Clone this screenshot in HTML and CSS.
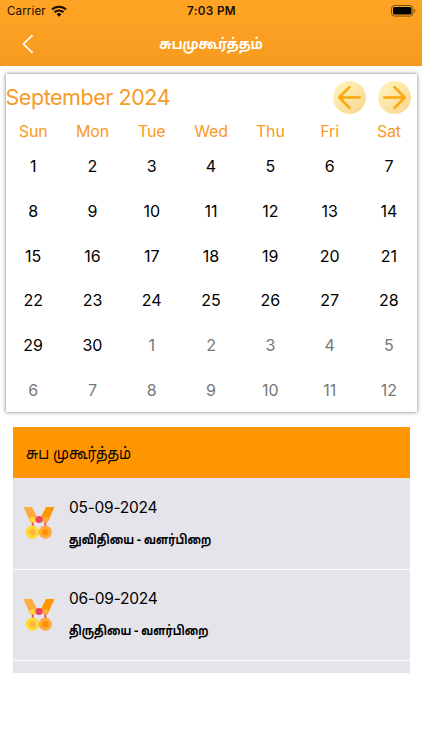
FILE: index.html
```html
<!DOCTYPE html>
<html lang="ta">
<head>
    <meta charset="UTF-8">
    <meta name="viewport" content="width=device-width, initial-scale=1.0">
    <title>சுபமுகூர்த்தம்</title>
    <link rel="stylesheet" href="styles.css">
</head>
<body>
    <!-- Header -->
    <header class="header">
        <div class="status-bar">
            <div class="carrier">
                <span>Carrier</span>
                <svg class="wifi" viewBox="0 0 16 12">
                    <g fill="none" stroke="#170d00" stroke-width="2.1">
                        <path d="M1 4.6a9.9 9.9 0 0 1 14 0"/>
                        <path d="M3.5 7.3a6.4 6.4 0 0 1 9 0"/>
                    </g>
                    <path d="M8 11.8 5.6 9.3a3.4 3.4 0 0 1 4.8 0z" fill="#170d00"/>
                </svg>
            </div>
            <div class="time">7:03 PM</div>
            <svg class="battery" viewBox="0 0 25 12">
                <rect x=".5" y=".5" width="21.5" height="10.6" rx="3" fill="none" stroke="#7d4d0c"/>
                <rect x="2" y="2" width="18.5" height="7.6" rx="1.6" fill="#000"/>
                <path d="M23.4 4v3.8c1.4-.6 1.4-3.2 0-3.8z" fill="#7d4d0c"/>
            </svg>
        </div>
        <div class="nav-bar">
            <svg class="back" viewBox="0 0 12 20">
                <path d="M10.6 1.2 1.4 10l9.2 8.8" fill="none" stroke="#fff" stroke-width="1.6"/>
            </svg>
            <h1 class="title">சுபமுகூர்த்தம்</h1>
        </div>
    </header>

    <!-- Calendar -->
    <section class="calendar">
        <div class="month-row">
            <h2 class="month">September 2024</h2>
            <button class="arrow-btn">
                <svg viewBox="0 0 32 32"><path d="M26 16H6M16 6 6 16l10 10"/></svg>
            </button>
            <button class="arrow-btn">
                <svg viewBox="0 0 32 32"><path d="M6 16h20M16 6l10 10-10 10"/></svg>
            </button>
        </div>
        <div class="weekdays">
            <span>Sun</span><span>Mon</span><span>Tue</span><span>Wed</span><span>Thu</span><span>Fri</span><span>Sat</span>
        </div>
        <div class="days">
            <span>1</span><span>2</span><span>3</span><span>4</span><span>5</span><span>6</span><span>7</span>
            <span>8</span><span>9</span><span>10</span><span>11</span><span>12</span><span>13</span><span>14</span>
            <span>15</span><span>16</span><span>17</span><span>18</span><span>19</span><span>20</span><span>21</span>
            <span>22</span><span>23</span><span>24</span><span>25</span><span>26</span><span>27</span><span>28</span>
            <span>29</span><span>30</span><span class="other">1</span><span class="other">2</span><span class="other">3</span><span class="other">4</span><span class="other">5</span>
            <span class="other">6</span><span class="other">7</span><span class="other">8</span><span class="other">9</span><span class="other">10</span><span class="other">11</span><span class="other">12</span>
        </div>
    </section>

    <!-- Medal icon shared by the list rows -->
    <svg class="defs">
        <symbol id="medal" viewBox="0 0 32 32">
            <path d="M.5 0H9l6 12-4 3.500H7.500z" fill="#ffab40"/>
            <path d="M31.500 0H23l-6 12 4 3.500h3.500z" fill="#ff9800"/>
            <path d="M9.700 13v7M22.300 13v7" stroke="#f0415f" stroke-width="1.8"/>
            <circle cx="9.700" cy="12.800" r="2.800" fill="#ffd92e"/>
            <circle cx="22.300" cy="12.800" r="2.800" fill="#ffab40"/>
            <circle cx="16" cy="12.500" r="3.500" fill="#f0415f"/>
            <circle cx="9.500" cy="25.200" r="6.600" fill="#ffd92e"/>
            <circle cx="9.500" cy="25.200" r="3.200" fill="#ffb545"/>
            <circle cx="22.300" cy="25.200" r="6.600" fill="#ffab40"/>
            <circle cx="22.300" cy="25.200" r="3.200" fill="#ff9100"/>
        </symbol>
    </svg>

    <!-- List -->
    <section class="list">
        <h3 class="list-title"><span>சுப முகூர்த்தம்</span></h3>
        <div class="item">
            <svg class="medal"><use href="#medal"/></svg>
            <div class="item-text">
                <p class="date">05-09-2024</p>
                <p class="tithi">துவிதியை - வளர்பிறை</p>
            </div>
        </div>
        <div class="item">
            <svg class="medal"><use href="#medal"/></svg>
            <div class="item-text">
                <p class="date">06-09-2024</p>
                <p class="tithi">திருதியை - வளர்பிறை</p>
            </div>
        </div>
        <div class="item"></div>
    </section>
</body>
</html>
```
FILE: styles.css
```css
* { box-sizing: border-box; margin: 0; padding: 0; }
body {
    font-family: Inter, "Noto Sans Tamil", sans-serif;
    background: #fff;
    height: 750px;
    overflow: hidden;
    color: #000;
}
.header {
    height: 66px;
    background: linear-gradient(#ffa424, #f79b20);
}
.status-bar {
    height: 22px;
    padding: 0 6px 0 7px;
    display: grid;
    grid-template-columns: 1fr auto 1fr;
    align-items: center;
    font-size: 11.5px;
    color: #170d00;
}
.carrier { display: flex; align-items: center; gap: 5px; letter-spacing: 0.15px; }
.wifi { width: 16px; height: 12px; }
.time { font-weight: 600; font-size: 11.7px; letter-spacing: 0.35px; }
.battery { width: 25px; height: 12px; justify-self: end; }
.nav-bar {
    height: 44px;
    padding: 0 22px;
    display: grid;
    grid-template-columns: 40px 1fr 40px;
    align-items: center;
}
.back { width: 12px; height: 20px; }
.title {
    font-size: 15px;
    font-weight: 700;
    text-align: center;
    color: #fff;
    transform: scaleX(0.87);
}
.calendar {
    width: 411px;
    height: 338px;
    margin: 8px 0 0 5.5px;
    background: #fff;
    box-shadow: 0 0 4px rgba(0,0,0,0.55);
}
.month-row {
    height: 46px;
    padding-right: 6px;
    display: flex;
    align-items: center;
    gap: 12px;
}
.month {
    flex: 1;
    font-size: 21.5px;
    font-weight: 400;
    letter-spacing: -0.45px;
    color: #f79a26;
}
.arrow-btn {
    width: 33px;
    height: 33px;
    border: none;
    border-radius: 50%;
    background: linear-gradient(135deg, #fff6c0, #f7d58c);
}
.arrow-btn svg {
    display: block;
    width: 33px;
    height: 33px;
    fill: none;
    stroke: #ffa60d;
    stroke-width: 2.4;
    stroke-linecap: round;
    stroke-linejoin: round;
}
.weekdays, .days {
    display: grid;
    grid-template-columns: repeat(7, 59.3px);
    margin-left: -2px;
    text-align: center;
    font-size: 16px;
}
.weekdays { height: 24px; line-height: 23px; letter-spacing: -0.15px; color: #f79a26; }
.days { grid-auto-rows: 44.8px; line-height: 44.8px; }
.other { color: #777; }
.defs { display: none; }
.list {
    width: 397px;
    height: 246px;
    margin: 15px 0 0 12.5px;
    overflow: hidden;
    background: #e5e4ea;
}
.list-title {
    height: 51px;
    padding: 1px 0 0 13px;
    line-height: 51px;
    font-size: 16.5px;
    font-weight: 400;
    background: #ff9500;
}
/* tamil glyphs run wide */
.list-title span {
    display: inline-block;
    transform: scaleX(0.85);
    transform-origin: left;
}
.item {
    height: 91.5px;
    padding-left: 10.5px;
    display: flex;
    align-items: center;
    border-bottom: 1px solid #fff;
}
.medal { width: 32px; height: 32px; }
.item-text { margin-left: 14px; }
.date { font-size: 15.5px; line-height: 22px; letter-spacing: -0.25px; }
.tithi {
    margin-top: 9px;
    font-size: 13px;
    line-height: 22px;
    font-weight: 700;
    transform: scaleX(0.807);
    transform-origin: left;
}
```
